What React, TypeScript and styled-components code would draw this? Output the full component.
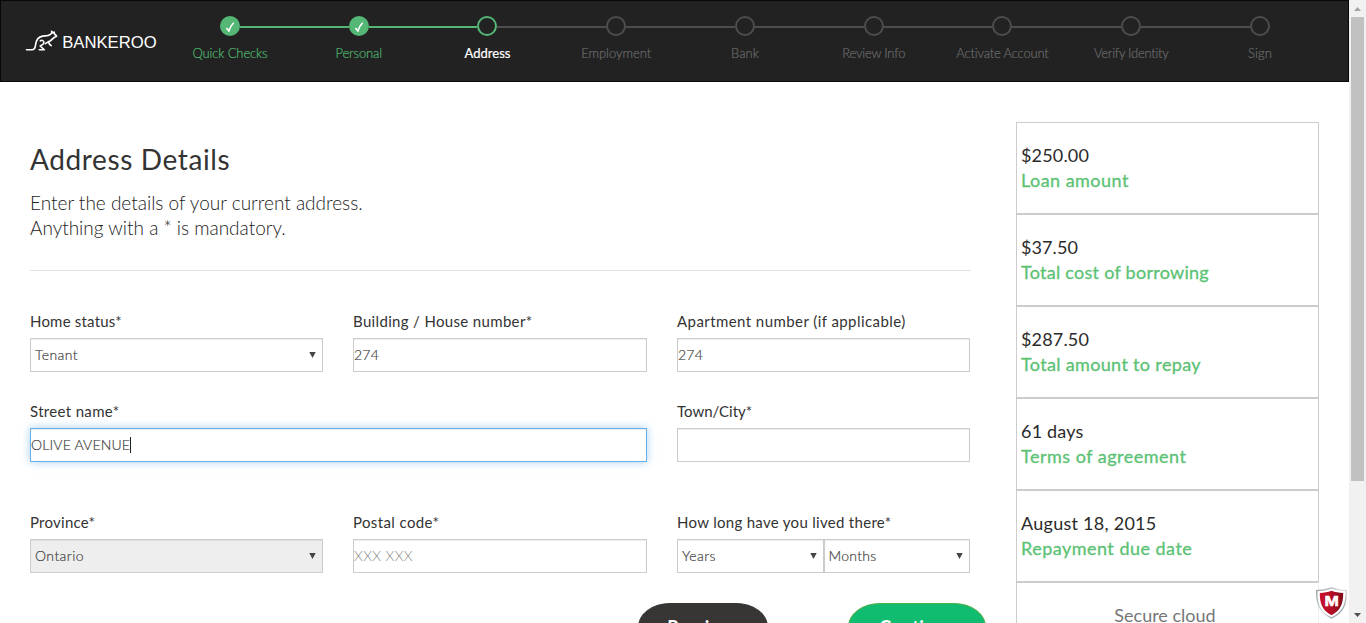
import React from 'react';
import styled, { createGlobalStyle } from 'styled-components';

const GlobalStyle = createGlobalStyle`
  * { box-sizing: border-box; }
  html, body { margin: 0; padding: 0; height: 100%; overflow: hidden; background: #fff; }
  body { font-family: Lato, "Liberation Sans", sans-serif; color: #333; }
`;

const Viewport = styled.div`
  display: flex;
  height: 623px;
  overflow: hidden;
`;

const Page = styled.div`
  position: relative;
  flex: 0 0 1349px;
  height: 623px;
  overflow: hidden;
`;

const Header = styled.header`
  display: flex;
  height: 82px;
  background: #222;
  border: 1px solid #080808;
`;

const Brand = styled.div`
  flex: 0 0 164.6px;
  padding: 28px 0 0 24px;
`;

const Steps = styled.ol`
  display: flex;
  list-style: none;
  margin: 0;
  padding: 15px 0 0;
`;

type StepState = 'done' | 'current' | 'todo';

const stepColor = { done: '#55b776', current: '#55b776', todo: '#4d4d4d' };
const stepText = { done: '#4fb56f', current: '#fff', todo: '#6a6a6a' };

const StepItem = styled.li`
  width: 128.75px;
  text-align: center;
`;

const Track = styled.div`
  display: flex;
  align-items: center;
  height: 20px;
`;

const Rail = styled.span<{ $color: string }>`
  flex: 1;
  height: 2px;
  margin-top: 2px;
  background: ${p => p.$color};
`;

const Dot = styled.span<{ $state: StepState }>`
  display: flex;
  align-items: center;
  justify-content: center;
  width: 20px;
  height: 20px;
  border-radius: 50%;
  border: 2px solid ${p => stepColor[p.$state]};
  background: ${p => (p.$state === 'done' ? stepColor.done : 'transparent')};
`;

const StepLabel = styled.div<{ $state: StepState; $ls: number }>`
  margin-top: 9px;
  font-size: 13px;
  line-height: 16px;
  font-weight: ${p => (p.$state === 'current' ? 400 : 300)};
  letter-spacing: ${p => p.$ls}px;
  color: ${p => stepText[p.$state]};
  -webkit-text-stroke: 0.2px ${p => stepText[p.$state]};
  white-space: nowrap;
`;

const Body = styled.div`
  display: flex;
  align-items: flex-start;
  padding: 40px 30px 0;
`;

const Main = styled.main`
  flex: 0 0 941px;
  min-width: 0;
  margin-right: 45px;
`;

const Title = styled.h1`
  margin: 20px 0 0;
  font-size: 28px;
  line-height: 34px;
  font-weight: 400;
  letter-spacing: 0.62px;
`;

const Intro = styled.p`
  margin: 14px 0 0;
  font-size: 19px;
  line-height: 25px;
  font-weight: 300;
  color: #222;
`;

const Rule = styled.hr`
  height: 1px;
  margin: 30px 0 0;
  border: 0;
  background: #e3e3e3;
`;

const FormGrid = styled.form`
  display: grid;
  grid-template-columns: 293px 294px 293px;
  column-gap: 30px;
  grid-template-rows: 90px 111px 80px;
  padding-top: 40px;
`;

const Field = styled.div<{ $span?: number }>`
  grid-column: span ${p => p.$span || 1};
`;

const Label = styled.label<{ $ls: number }>`
  display: block;
  height: 27px;
  font-size: 15px;
  line-height: 20px;
  letter-spacing: ${p => p.$ls}px;
  white-space: nowrap;
`;

const Box = styled.div<{ $select?: boolean; $disabled?: boolean; $focus?: boolean; $ls?: number; $muted?: boolean }>`
  display: flex;
  align-items: center;
  flex: 1;
  height: 34px;
  padding: 0 ${p => (p.$select ? '6px 0 4px' : '1px 0 0')};
  border: 1px solid ${p => (p.$focus ? '#66afe9' : '#ccc')};
  background: ${p => (p.$disabled ? '#eee' : '#fff')};
  box-shadow: inset 0 1px 1px rgba(0, 0, 0, 0.075)${p => (p.$focus ? ', 0 0 8px rgba(102, 175, 233, 0.6)' : '')};
  font-size: 14px;
  font-weight: 300;
  line-height: 20px;
  letter-spacing: ${p => p.$ls || 0}px;
  color: ${p => (p.$muted ? '#888' : '#444')};
  -webkit-text-stroke: ${p => (p.$muted ? '0' : '0.2px #444')};
`;

const Arrow = styled.svg`
  margin-left: auto;
  margin-top: -1px;
`;

const Caret = styled.span`
  width: 1px;
  height: 16px;
  background: #222;
`;

const Pair = styled.div`
  display: flex;
`;

const Actions = styled.div`
  display: flex;
  gap: 80px;
  padding: 11px 0 0 608px;
`;

const Pill = styled.button<{ $color: string; $edge: string; $width: number }>`
  flex: 0 0 ${p => p.$width}px;
  height: 48px;
  padding: 0;
  border: 1px solid ${p => p.$edge};
  border-radius: 32px / 24px;
  background: ${p => p.$color};
  color: #fff;
  font: 700 18px/44px Lato, sans-serif;
  letter-spacing: 0.3px;
`;

const Summary = styled.aside`
  flex: 0 0 303px;
`;

const Card = styled.div`
  height: 92px;
  padding: 20px 4px 0;
  border: 1px solid #ccc;
  font-size: 18px;
  line-height: 25px;
`;

const Amount = styled.div<{ $ls: number }>`
  letter-spacing: ${p => p.$ls}px;
  color: #2b2b2b;
`;

const Caption = styled.div<{ $ls: number }>`
  letter-spacing: ${p => p.$ls}px;
  color: #5bc274;
  -webkit-text-stroke: 0.3px #5bc274;
`;

const SecureCard = styled(Card)`
  padding: 20px 5px 0 0;
  border-right-color: #f0f0f0;
  text-align: center;
  color: #777;
`;

const Shield = styled.svg`
  position: absolute;
  left: 1316px;
  top: 587px;
`;

const Scrollbar = styled.div`
  display: flex;
  flex-direction: column;
  align-items: center;
  flex: 0 0 17px;
  background: #f1f1f1;
`;

const ScrollButton = styled.div`
  display: flex;
  align-items: center;
  justify-content: center;
  height: 17px;
`;

const Thumb = styled.div`
  width: 13px;
  height: 464px;
  margin-bottom: auto;
  background: #c1c1c1;
`;

const steps: { label: string; state: StepState; ls: number }[] = [
  { label: 'Quick Checks', state: 'done', ls: -0.13 },
  { label: 'Personal', state: 'done', ls: -0.12 },
  { label: 'Address', state: 'current', ls: 0.03 },
  { label: 'Employment', state: 'todo', ls: 0 },
  { label: 'Bank', state: 'todo', ls: 0 },
  { label: 'Review Info', state: 'todo', ls: -0.2 },
  { label: 'Activate Account', state: 'todo', ls: -0.17 },
  { label: 'Verify Identity', state: 'todo', ls: -0.27 },
  { label: 'Sign', state: 'todo', ls: 0.12 },
];

const summary = [
  { amount: '$250.00', als: 0.16, caption: 'Loan amount', cls: 0.46 },
  { amount: '$37.50', als: 0.1, caption: 'Total cost of borrowing', cls: 0.27 },
  { amount: '$287.50', als: 0.16, caption: 'Total amount to repay', cls: 0.34 },
  { amount: '61 days', als: 0.2, caption: 'Terms of agreement', cls: 0.5 },
  { amount: 'August 18, 2015', als: 0.26, caption: 'Repayment due date', cls: 0.48 },
];

function Logo() {
  return (
    <svg width="134" height="26" viewBox="0 0 134 26" fill="none">
      <g stroke="#fff" strokeWidth="1.6" strokeLinecap="round" strokeLinejoin="round">
        <path d="M1.5 20.8H7C9.6 20.8 10.2 19 10.5 16.2C11 11.2 13.4 7.8 17.6 7.1C20.7 6.7 23.3 7.3 25 5.6L26.8 4.2L26.6 2.4L28.2 3.9L29.2 3L29.5 5C30.4 5.7 31 6.4 31.6 7.3L29.2 8.4C27.9 9.6 26.7 11 24.9 12.2" />
        <path d="M15.3 11.8C16.9 10.6 19 11.8 18.9 13.8C18.6 15.4 16.7 16.2 15.2 17L19.3 20.8H14.3" />
        <path d="M20.4 14.6L23.9 12.4C23.4 14.2 24.4 15.4 26.2 16.6" />
      </g>
      <text x="37.2" y="19.4" fill="#fff" fontFamily="Liberation Sans, Arial, sans-serif" fontSize="17" textLength="94.5" lengthAdjust="spacingAndGlyphs">
        BANKEROO
      </text>
    </svg>
  );
}

function DropArrow() {
  return (
    <Arrow width="7" height="6" viewBox="0 0 7 6">
      <path d="M0.3 0H6.7L3.5 6Z" fill="#444" />
    </Arrow>
  );
}

export default function App() {
  return (
    <>
      <GlobalStyle />
      <Viewport>
        <Page>
          <Header>
            <Brand>
              <Logo />
            </Brand>
            <Steps>
              {steps.map((s, i) => {
                const before = i === 0 ? 'transparent' : s.state === 'todo' ? '#4d4d4d' : '#55b776';
                const after = i === steps.length - 1 ? 'transparent' : s.state === 'done' ? '#55b776' : '#4d4d4d';
                return (
                  <StepItem key={s.label}>
                    <Track>
                      <Rail $color={before} />
                      <Dot $state={s.state}>
                        {s.state === 'done' && (
                          <svg width="10" height="11" viewBox="0 0 10 11" fill="none">
                            <path d="M1.4 7L3.9 10C4.8 6.8 6.3 4.2 8.7 1.8" stroke="#fff" strokeWidth="1.6" />
                          </svg>
                        )}
                      </Dot>
                      <Rail $color={after} />
                    </Track>
                    <StepLabel $state={s.state} $ls={s.ls}>{s.label}</StepLabel>
                  </StepItem>
                );
              })}
            </Steps>
          </Header>

          <Body>
            <Main>
              <Title>Address Details</Title>
              <Intro>
                Enter the details of your current address.
                <br />
                Anything with a * is mandatory.
              </Intro>
              <Rule />
              <FormGrid>
                <Field>
                  <Label $ls={0.2}>Home status*</Label>
                  <Box $select $ls={0.4}>Tenant<DropArrow /></Box>
                </Field>
                <Field>
                  <Label $ls={0.34}>Building / House number*</Label>
                  <Box $ls={0.2}>274</Box>
                </Field>
                <Field>
                  <Label $ls={0.43}>Apartment number (if applicable)</Label>
                  <Box $ls={0.2}>274</Box>
                </Field>
                <Field $span={2}>
                  <Label $ls={0.33}>Street name*</Label>
                  <Box $focus $ls={0.16}>OLIVE AVENUE<Caret /></Box>
                </Field>
                <Field>
                  <Label $ls={-0.02}>Town/City*</Label>
                  <Box />
                </Field>
                <Field>
                  <Label $ls={0.25}>Province*</Label>
                  <Box $select $disabled $ls={0.43}>Ontario<DropArrow /></Box>
                </Field>
                <Field>
                  <Label $ls={0.38}>Postal code*</Label>
                  <Box $muted $ls={0.41}>XXX XXX</Box>
                </Field>
                <Field>
                  <Label $ls={0.3}>How long have you lived there*</Label>
                  <Pair>
                    <Box $select $ls={0.45}>Years<DropArrow /></Box>
                    <Box $select $ls={0.27}>Months<DropArrow /></Box>
                  </Pair>
                </Field>
              </FormGrid>
              <Actions>
                <Pill $color="#373634" $edge="#373634" $width={130}>Previous</Pill>
                <Pill $color="#10bd70" $edge="#4cae4c" $width={138}>Continue</Pill>
              </Actions>
            </Main>

            <Summary>
              {summary.map(s => (
                <Card key={s.caption}>
                  <Amount $ls={s.als}>{s.amount}</Amount>
                  <Caption $ls={s.cls}>{s.caption}</Caption>
                </Card>
              ))}
              <SecureCard>Secure cloud</SecureCard>
            </Summary>
          </Body>

          <Shield width="31" height="32" viewBox="0 0 31 32">
            <defs>
              <linearGradient id="rim" x1="0" y1="0" x2="1" y2="1">
                <stop offset="0" stopColor="#8b969c" />
                <stop offset="0.5" stopColor="#dfe3e5" />
                <stop offset="1" stopColor="#77838a" />
              </linearGradient>
              <linearGradient id="red" x1="0" y1="0" x2="1" y2="0">
                <stop offset="0" stopColor="#c8102e" />
                <stop offset="0.5" stopColor="#b50f26" />
                <stop offset="1" stopColor="#7d0c1c" />
              </linearGradient>
            </defs>
            <path d="M0.8 3.6C6 3.4 11 2.6 15.5 0.8C20 2.6 25 3.4 30.2 3.6C30.5 17 27.5 25.5 15.5 31C3.5 25.5 0.5 17 0.8 3.6Z" fill="#fff" stroke="url(#rim)" strokeWidth="1.4" />
            <path d="M3.8 6C8 5.8 12 5 15.5 3.7C19 5 23 5.8 27.2 6C27.3 16.5 24.6 23.5 15.5 28.2C6.4 23.5 3.7 16.5 3.8 6Z" fill="url(#red)" />
            <text x="8.4" y="19.2" fill="#fff" stroke="#fff" strokeWidth="0.6" fontFamily="Liberation Sans, Arial, sans-serif" fontWeight="700" fontSize="15.5" textLength="14.4" lengthAdjust="spacingAndGlyphs">
              M
            </text>
          </Shield>
        </Page>

        <Scrollbar>
          <ScrollButton>
            <svg width="7" height="4" viewBox="0 0 7 4"><path d="M0 4L3.5 0L7 4Z" fill="#a3a3a3" /></svg>
          </ScrollButton>
          <Thumb />
          <ScrollButton>
            <svg width="7" height="4" viewBox="0 0 7 4"><path d="M0 0L3.5 4L7 0Z" fill="#505050" /></svg>
          </ScrollButton>
        </Scrollbar>
      </Viewport>
    </>
  );
}
